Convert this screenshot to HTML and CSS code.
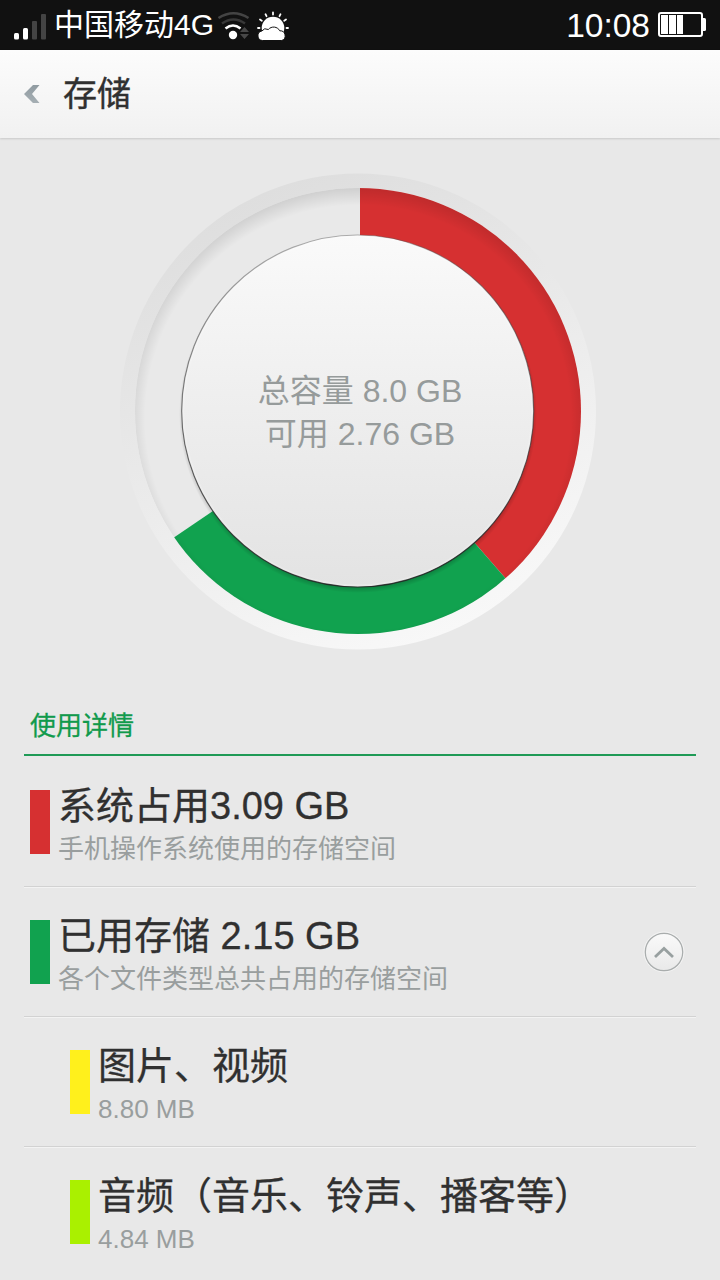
FILE: index.html
```html
<!DOCTYPE html>
<html lang="zh-CN">
<head>
<meta charset="utf-8">
<title>存储</title>
<link rel="stylesheet" href="styles.css">
</head>
<body>
<div class="statusbar">
  <svg class="signal" width="34" height="28" viewBox="0 0 34 28">
    <rect x="0" y="21" width="5" height="6.5" rx="1.5" fill="#fff"/>
    <rect x="9" y="16" width="5" height="11.5" rx="1.5" fill="#fff"/>
    <rect x="18" y="9" width="5" height="18.500" rx="1" fill="#444"/>
    <rect x="27" y="2" width="5" height="25.500" rx="1" fill="#444"/>
  </svg>
  <span class="carrier">中国移动4G</span>
  <svg class="wifi" width="34" height="30" viewBox="217 11 34 30">
    <g fill="none">
      <path d="M218.500 18Q233.500 8.500 248.500 18" stroke="#444" stroke-width="2.600"/>
      <path d="M222 23.500Q233.500 15.500 245 23.500" stroke="#383838" stroke-width="2.600"/>
      <path d="M225.500 28.500Q233 22.500 240.500 28.500" stroke="#fff" stroke-width="2.600"/>
    </g>
    <circle cx="233" cy="35" r="4.200" fill="#fff"/>
    <path d="M244.500 27l4.500 5h-9zM244.500 39l4.500-5h-9z" fill="#484848"/>
  </svg>
  <svg class="weather" width="34" height="30" viewBox="256 11 34 30">
    <g stroke="#fff" stroke-width="1.800" stroke-linecap="round">
      <path d="M273 12.500v2M265.500 14.200l1 2M280.500 14.200l-1 2M260 19.500l1.800 1.200M286 19.500l-1.800 1.200M258 28h1.500M286.500 28h1.500"/>
    </g>
    <circle cx="273" cy="28" r="11.300" fill="#fff"/>
    <path d="M262.500 40.500a4.800 4.800 0 0 1-.7-9.500a5 5 0 0 1 6.500-1.500a7 7 0 0 1 11.500 1.300a5 5 0 0 1 2 9.700z" fill="#fff" stroke="#111" stroke-width="1"/>
  </svg>
  <span class="clock">10:08</span>
  <svg class="battery" width="49" height="26" viewBox="0 0 49 26">
    <rect x="1" y="1" width="43" height="23" rx="2" fill="none" stroke="#fff" stroke-width="2"/>
    <path d="M45 6h1.500a1.500 1.500 0 0 1 1.500 1.500v10a1.500 1.500 0 0 1-1.500 1.500h-1.500z" fill="#fff"/>
    <path d="M3 3h7v19h-7zM11 3h7v19h-7zM19 3h6v19h-6z" fill="#fff"/>
  </svg>
</div>
<header class="header">
  <svg class="back" width="16" height="20" viewBox="0 0 16 20">
    <defs><linearGradient id="back-fill" x1="0" y1="0" x2="0" y2="1"><stop offset="0" stop-color="#909ba1"/><stop offset="1" stop-color="#a6afb4"/></linearGradient></defs>
    <path d="M0 10L9 1H15.500L8 10L15.500 19H9z" fill="url(#back-fill)"/>
  </svg>
  <h1 class="title">存储</h1>
</header>
<main>
  <section class="chart">
    <svg class="ring" width="480" height="480" viewBox="118 171 480 480">
      <defs>
        <linearGradient id="rim" x1=".3" y1=".04" x2=".7" y2=".96">
          <stop offset="0" stop-color="#dedede"/><stop offset=".5" stop-color="#ebebeb"/><stop offset="1" stop-color="#f8f8f8"/>
        </linearGradient>
        <linearGradient id="knob" x1="0" y1="0" x2="0" y2="1">
          <stop offset="0" stop-color="#fafafa"/><stop offset=".45" stop-color="#efefef"/><stop offset="1" stop-color="#e3e3e3"/>
        </linearGradient>
        <linearGradient id="edge" x1="0" y1="0" x2="0" y2="1">
          <stop offset="0" stop-color="#555" stop-opacity=".45"/><stop offset="1" stop-color="#222" stop-opacity=".9"/>
        </linearGradient>
        <radialGradient id="inset" gradientUnits="userSpaceOnUse" cx="358" cy="418" r="230">
          <stop offset=".925" stop-color="#000" stop-opacity="0"/><stop offset="1" stop-color="#000" stop-opacity=".11"/>
        </radialGradient>
        <radialGradient id="shade" gradientUnits="userSpaceOnUse" cx="358" cy="414" r="179">
          <stop offset=".965" stop-color="#000" stop-opacity=".22"/><stop offset="1" stop-color="#000" stop-opacity="0"/>
        </radialGradient>
        <clipPath id="track"><circle cx="358" cy="411" r="223"/></clipPath>
      </defs>
      <circle cx="358" cy="411.500" r="238" fill="url(#rim)"/>
      <g clip-path="url(#track)">
        <circle cx="358" cy="411" r="223" fill="#e9e9e9"/>
        <path d="M360 411V151A260 260 0 0 1 530.600 607.200z" fill="#d63031"/>
        <path d="M360 411L530.600 607.200A260 260 0 0 1 145 557.200z" fill="#11a24f"/>
        <circle cx="358" cy="411" r="223" fill="url(#inset)"/>
        <circle cx="358" cy="414" r="179" fill="url(#shade)"/>
      </g>
      <circle cx="357.700" cy="411" r="176" fill="url(#knob)" stroke="url(#edge)" stroke-width="1.200"/>
      <circle cx="357.700" cy="411" r="174.500" fill="none" stroke="#fff" stroke-opacity=".2" stroke-width="2"/>
    </svg>
    <div class="summary">
      <div class="summary-line">总容量 8.0 GB</div>
      <div class="summary-line">可用 2.76 GB</div>
    </div>
  </section>
  <section class="details">
    <h2 class="section-title">使用详情</h2>
    <ul class="list">
      <li class="row">
        <span class="swatch red"></span>
        <div class="text"><div class="name">系统占用3.09 GB</div><div class="note">手机操作系统使用的存储空间</div></div>
      </li>
      <li class="row">
        <span class="swatch green"></span>
        <div class="text"><div class="name">已用存储 2.15 GB</div><div class="note">各个文件类型总共占用的存储空间</div></div>
        <svg class="toggle" width="42" height="42" viewBox="0 0 42 42">
          <defs><linearGradient id="btn" x1="0" y1="0" x2="0" y2="1"><stop offset="0" stop-color="#fafafa"/><stop offset="1" stop-color="#e9e9e9"/></linearGradient></defs>
          <circle cx="21" cy="21" r="20" fill="none" stroke="#f4f4f4" stroke-width="1"/>
          <circle cx="21" cy="21" r="18.700" fill="url(#btn)" stroke="#a9adad" stroke-width="1.200"/>
          <path d="M12 26L21 17.500L30 26" fill="none" stroke="#98a0a0" stroke-width="2.800"/>
        </svg>
      </li>
      <li class="row sub">
        <span class="swatch yellow"></span>
        <div class="text"><div class="name">图片、视频</div><div class="note">8.80 MB</div></div>
      </li>
      <li class="row sub">
        <span class="swatch lime"></span>
        <div class="text"><div class="name">音频（音乐、铃声、播客等）</div><div class="note">4.84 MB</div></div>
      </li>
    </ul>
  </section>
</main>
</body>
</html>
```
FILE: styles.css
```css
* { box-sizing: border-box; margin: 0; padding: 0; }
body {
  width: 720px;
  height: 1280px;
  overflow: hidden;
  background: #e8e8e8;
  color: #303030;
  font-family: "Liberation Sans", "Noto Sans CJK SC", sans-serif;
}
svg { display: block; flex: none; }
.statusbar {
  display: flex;
  align-items: center;
  height: 50px;
  padding: 0 13px 0 14px;
  background: #111;
  color: #fff;
}
.signal { margin-top: 1px; }
.carrier { width: 163px; margin-left: 6px; font-size: 30px; line-height: 52px; white-space: nowrap; }
.wifi { margin-top: 2px; }
.weather { margin: 2px 0 0 5px; }
.clock { margin-left: auto; font-size: 33.500px; line-height: 51px; }
.battery { margin-left: 8px; }
.header {
  display: flex;
  align-items: center;
  height: 88px;
  padding-left: 24px;
  background: linear-gradient(#fcfcfc, #f1f1f1);
  box-shadow: 0 1px 2px rgba(0, 0, 0, .14);
}
.title {
  margin-left: 23px;
  font-size: 34px;
  font-weight: 400;
  line-height: 88px;
  -webkit-text-stroke: .4px;
}
.chart {
  display: grid;
  justify-items: center;
  align-items: center;
  height: 560px;
  padding: 33px 0 47px;
}
.ring, .summary { grid-area: 1 / 1; }
.ring { margin-right: 4px; }
.summary { padding-top: 3px; color: #969b9b; font-size: 32px; line-height: 43px; text-align: center; }
.details { padding: 0 24px; }
.section-title {
  height: 58px;
  padding-left: 6px;
  border-bottom: 2px solid #1f9a56;
  color: #119a4c;
  font-size: 26px;
  font-weight: 400;
  line-height: 57px;
  -webkit-text-stroke: .3px;
}
.list { padding-top: 1px; list-style: none; }
.row {
  display: flex;
  height: 130px;
  padding: 23px 11px 0 6px;
  border-bottom: 1px solid #d2d2d2;
  box-shadow: 0 1px #f3f3f3;
}
.row:last-child { border-bottom: 0; box-shadow: none; }
.row.sub { padding-left: 46px; }
.swatch { flex: none; width: 20px; height: 64px; margin: 10px 8px 0 0; }
.red { background: #d63031; }
.green { background: #11a24f; }
.yellow { background: #fff01c; }
.lime { background: #aaf000; }
.text { flex: 1; white-space: nowrap; }
.name { font-size: 38px; line-height: 52px; -webkit-text-stroke: .3px; }
.note { color: #999e9e; font-size: 26px; line-height: 34px; }
.toggle { margin-top: 21px; }
```
